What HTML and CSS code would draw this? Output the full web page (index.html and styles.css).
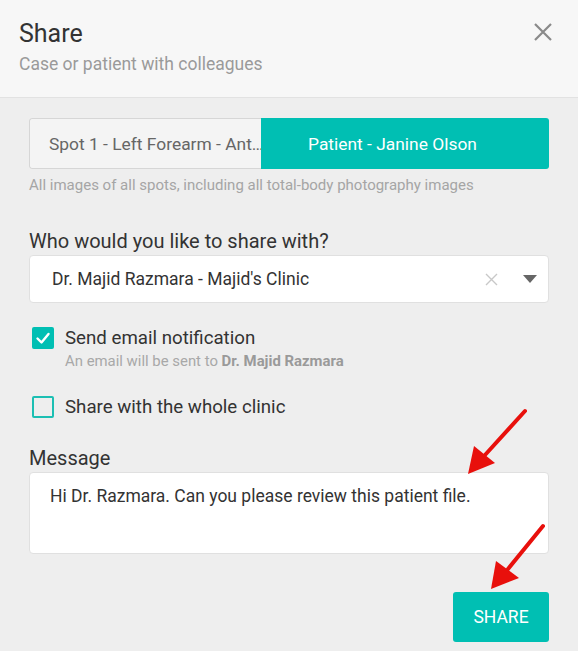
FILE: index.html
```html
<!DOCTYPE html>
<html>
<head>
<meta charset="utf-8">
<link rel="stylesheet" href="styles.css">
</head>
<body>
<div class="modal">
  <header class="head">
    <div class="titles">
      <h1 class="title">Share</h1>
      <p class="subtitle">Case or patient with colleagues</p>
    </div>
    <svg class="close" width="20" height="20" viewBox="0 0 20 20"><path d="M2 2L18 18M18 2L2 18" stroke="#8a8a8a" stroke-width="2.2" fill="none"/></svg>
  </header>
  <main class="body">
    <div class="toggle">
      <div class="tab tab-off">Spot 1 - Left Forearm - Ant…</div>
      <div class="tab tab-on">Patient - Janine Olson</div>
    </div>
    <p class="hint">All images of all spots, including all total-body photography images</p>

    <label class="label who">Who would you like to share with?</label>
    <div class="select">
      <span class="select-text">Dr. Majid Razmara - Majid's Clinic</span>
      <svg class="clear" width="13" height="13" viewBox="0 0 13 13"><path d="M1 1L12 12M12 1L1 12" stroke="#c8c8c8" stroke-width="1.4" fill="none"/></svg>
      <svg class="caret" width="14" height="8" viewBox="0 0 14 8"><path d="M0 0H14L7 8Z" fill="#666"/></svg>
    </div>

    <div class="check-row first">
      <span class="box checked"><svg width="22" height="22" viewBox="0 0 22 22"><path d="M5.5 11.5L9.5 15.5L16.5 7" stroke="#fff" stroke-width="2.4" fill="none" stroke-linecap="round" stroke-linejoin="round"/></svg></span>
      <div class="check-text">
        <div class="check-label">Send email notification</div>
        <div class="check-sub">An email will be sent to <b>Dr. Majid Razmara</b></div>
      </div>
    </div>

    <div class="check-row second">
      <span class="box"></span>
      <div class="check-text">
        <div class="check-label">Share with the whole clinic</div>
      </div>
    </div>

    <label class="label msg">Message</label>
    <div class="textarea">Hi Dr. Razmara. Can you please review this patient file.</div>

    <div class="actions">
      <button class="share">SHARE</button>
    </div>
  </main>
  <svg class="arrows" width="578" height="651" viewBox="0 0 578 651">
    <line x1="525" y1="411" x2="485" y2="455" stroke="#e8100c" stroke-width="4" stroke-linecap="round"/>
    <polygon points="468,474 474,446 495,463" fill="#e8100c"/>
    <line x1="543" y1="526" x2="508" y2="569" stroke="#e8100c" stroke-width="4" stroke-linecap="round"/>
    <polygon points="491,589 496,561 519,578" fill="#e8100c"/>
  </svg>
</div>
</body>
</html>
```
FILE: styles.css
```css
* { box-sizing: border-box; }
html, body { margin: 0; padding: 0; }
body {
  font-family: Roboto, "Liberation Sans", sans-serif;
  background: #eeeeee;
  width: 578px;
  height: 651px;
  overflow: hidden;
}
.modal { position: relative; width: 578px; height: 651px; }
.head {
  background: #f7f7f7;
  height: 98px;
  border-bottom: 1px solid #e2e2e2;
  display: flex;
  justify-content: space-between;
  align-items: flex-start;
  padding: 19px 25px 0 19px;
}
.title {
  margin: 0;
  font-size: 25px;
  font-weight: 400;
  color: #333;
  line-height: 30px;
}
.subtitle {
  margin: 4px 0 0;
  font-size: 17.5px;
  color: #9a9a9a;
  line-height: 22px;
}
.close { margin-top: 3px; }
.body { padding: 20px 29px 0 29px; }
.toggle {
  display: flex;
  height: 51px;
  border-radius: 3px;
  overflow: hidden;
}
.tab {
  display: flex;
  align-items: center;
  font-size: 17.4px;
  white-space: nowrap;
}
.tab-off {
  width: 232px;
  background: #f4f4f4;
  border: 1px solid #d6d6d6;
  border-right: none;
  border-radius: 3px 0 0 3px;
  color: #666;
  padding-left: 19px;
}
.tab-on {
  flex: 1;
  background: #00bfb3;
  color: #fff;
  padding-left: 47px;
}
.hint {
  margin: 7px 0 0;
  font-size: 15px;
  color: #a5a5a5;
  line-height: 18px;
}
.label {
  display: block;
  font-size: 20px;
  font-weight: 400;
  color: #333;
  line-height: 22px;
}
.who { margin-top: 36px; }
.select {
  margin-top: 3px;
  height: 48px;
  background: #fff;
  border: 1px solid #e0e0e0;
  border-radius: 4px;
  display: flex;
  align-items: center;
  padding: 0 11px 0 22px;
}
.select-text { flex: 1; font-size: 17.5px; color: #333; }
.clear { margin-right: 25px; }
.check-row { display: flex; align-items: flex-start; }
.first { margin-top: 24px; margin-left: 3px; }
.second { margin-top: 26px; margin-left: 3px; }
.box {
  width: 22px;
  height: 22px;
  border: 2px solid #1cbfb3;
  border-radius: 2px;
  flex: none;
  display: block;
}
.box.checked { background: #00bfb3; border: none; }
.box svg { display: block; }
.check-text { margin-left: 11px; }
.check-label { font-size: 18.7px; color: #333; line-height: 22px; }
.check-sub { font-size: 14.9px; color: #a8a8a8; margin-top: 4px; line-height: 17px; }
.check-sub b { font-weight: 700; color: #9a9a9a; }
.msg { margin-top: 29px; }
.textarea {
  margin-top: 3px;
  height: 82px;
  background: #fff;
  border: 1px solid #e0e0e0;
  border-radius: 4px;
  padding: 12px 20px;
  font-size: 17.5px;
  color: #333;
  line-height: 22px;
}
.actions { display: flex; justify-content: flex-end; margin-top: 38px; }
.share {
  width: 96px;
  height: 50px;
  background: #00bfb3;
  color: #fff;
  border: none;
  border-radius: 3px;
  font-family: Roboto, "Liberation Sans", sans-serif;
  font-size: 17.5px;
}
.arrows { position: absolute; left: 0; top: 0; pointer-events: none; }
```
